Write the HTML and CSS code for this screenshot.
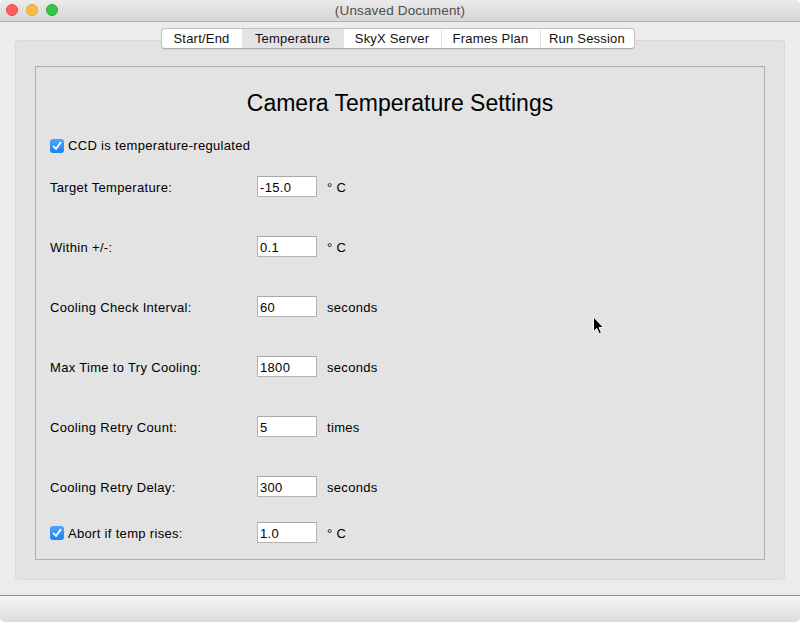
FILE: index.html
```html
<!DOCTYPE html>
<html>
<head>
<meta charset="utf-8">
<link rel="stylesheet" href="styles.css">
</head>
<body>
<div class="window">
  <div class="titlebar">
    <div class="lights">
      <span class="light red"></span>
      <span class="light yellow"></span>
      <span class="light green"></span>
    </div>
    <div class="title">(Unsaved Document)</div>
  </div>
  <div class="content">
    <div class="tabs">
      <div class="tab t1">Start/End</div>
      <div class="tab t2 selected">Temperature</div>
      <div class="tab t3">SkyX Server</div>
      <div class="tab t4">Frames Plan</div>
      <div class="tab t5">Run Session</div>
    </div>
    <div class="panel">
      <div class="box">
        <h1 class="heading">Camera Temperature Settings</h1>
        <div class="row check-row">
          <span class="checkbox"><svg viewBox="0 0 14 14" width="14" height="14"><path d="M3.6 7.4 L6 10 L10.6 3.6" fill="none" stroke="#fff" stroke-width="1.8" stroke-linecap="round" stroke-linejoin="round"/></svg></span>
          <span class="check-label">CCD is temperature-regulated</span>
        </div>
        <div class="row first">
          <span class="label">Target Temperature:</span>
          <span class="field">-15.0</span>
          <span class="unit">° C</span>
        </div>
        <div class="row">
          <span class="label">Within +/-:</span>
          <span class="field">0.1</span>
          <span class="unit">° C</span>
        </div>
        <div class="row">
          <span class="label">Cooling Check Interval:</span>
          <span class="field">60</span>
          <span class="unit">seconds</span>
        </div>
        <div class="row">
          <span class="label">Max Time to Try Cooling:</span>
          <span class="field">1800</span>
          <span class="unit">seconds</span>
        </div>
        <div class="row">
          <span class="label">Cooling Retry Count:</span>
          <span class="field">5</span>
          <span class="unit">times</span>
        </div>
        <div class="row">
          <span class="label">Cooling Retry Delay:</span>
          <span class="field">300</span>
          <span class="unit">seconds</span>
        </div>
        <div class="row last">
          <span class="label label-check">
            <span class="checkbox"><svg viewBox="0 0 14 14" width="14" height="14"><path d="M3.6 7.4 L6 10 L10.6 3.6" fill="none" stroke="#fff" stroke-width="1.8" stroke-linecap="round" stroke-linejoin="round"/></svg></span>
            <span class="check-label">Abort if temp rises:</span>
          </span>
          <span class="field">1.0</span>
          <span class="unit">° C</span>
        </div>
      </div>
    </div>
  </div>
  <div class="statusbar"></div>
  <svg class="cursor" viewBox="0 0 14 20" width="14" height="20"><path d="M1.5 1 L1.5 15.5 L4.8 12.4 L7.2 17.8 L9.4 16.8 L7.1 11.6 L11.6 11.6 Z" fill="#000" stroke="#fff" stroke-width="1" stroke-linejoin="round"/></svg>
</div>
</body>
</html>
```

FILE: styles.css
```css
* { box-sizing: border-box; }
html, body {
  margin: 0;
  padding: 0;
  background: #ffffff;
}
body {
  font-family: "Liberation Sans", Arial, sans-serif;
  font-size: 13px;
  color: #000;
}
.window {
  position: relative;
  width: 800px;
  height: 622px;
  border-radius: 5px;
  overflow: hidden;
  background: #ececec;
}
.titlebar {
  position: relative;
  height: 22px;
  background: linear-gradient(#ebebeb, #d6d6d6);
  border-bottom: 1px solid #b2b2b2;
  display: flex;
  align-items: center;
  justify-content: center;
}
.lights {
  position: absolute;
  left: 6px;
  top: 4px;
  display: flex;
  gap: 8px;
}
.light {
  width: 12px;
  height: 12px;
  border-radius: 50%;
  display: block;
}
.red { background: #fc605c; border: 1px solid #de4a45; }
.yellow { background: #fdbc40; border: 1px solid #dea236; }
.green { background: #34c84a; border: 1px solid #27aa35; }
.title {
  color: #4d4d4d;
  font-size: 13.5px;
  line-height: 21px;
  letter-spacing: 0.15px;
}
.content {
  height: 573px;
  padding: 6px 15px 15px 15px;
  display: flex;
  flex-direction: column;
}
.tabs {
  position: relative;
  z-index: 2;
  align-self: center;
  margin-right: 5px;
  height: 21px;
  display: flex;
  background: #fff;
  border: 1px solid #c3c3c3;
  border-bottom-color: #acacac;
  border-radius: 4px;
  overflow: hidden;
  box-shadow: 0 0.5px 1px rgba(0,0,0,0.08);
}
.tab {
  line-height: 19px;
  text-align: center;
  color: #111;
  font-size: 13px;
  letter-spacing: 0.2px;
}
.tab + .tab { border-left: 1px solid #e2e2e2; }
.t1 { width: 80px; }
.t2 { width: 101px; }
.t3 { width: 98px; }
.t4 { width: 99px; }
.t5 { width: 94px; }
.tab.selected { background: #e3e3e3; }
.panel {
  margin-top: -9px;
  height: 540px;
  background: #e3e3e3;
  border: 1px solid #d9d9d9;
  border-bottom-color: #dcdcdc;
  border-radius: 4px;
  padding: 25px 19px 19px 19px;
}
.box {
  height: 494px;
  border: 1px solid #aeaeae;
  padding: 23px 14px 0 14px;
  display: flex;
  flex-direction: column;
}
.heading {
  margin: 0;
  font-weight: normal;
  font-size: 23px;
  line-height: 26px;
  text-align: center;
  color: #000;
}
.row {
  height: 21px;
  display: flex;
  align-items: center;
  margin-top: 39px;
  letter-spacing: 0.32px;
}
.row.check-row { margin-top: 19px; }
.row.first { margin-top: 20px; }
.row.last { margin-top: 25px; }
.label {
  width: 207px;
  flex: none;
  display: flex;
  align-items: center;
  padding-top: 2px;
}
.label-check { padding-top: 0; }
.label-check .check-label { padding-top: 2px; }
.checkbox {
  width: 14px;
  height: 14px;
  border-radius: 3px;
  background: linear-gradient(#4ca3fd, #1a82fb);
  display: inline-flex;
  flex: none;
}
.checkbox svg { display: block; }
.check-label { margin-left: 4px; }
.field {
  width: 60px;
  height: 21px;
  background: #fff;
  border: 1px solid #b3b3b3;
  border-top-color: #a9a9a9;
  padding-left: 2px;
  padding-top: 1px;
  line-height: 19px;
  font-size: 13px;
  flex: none;
}
.unit { margin-left: 10px; padding-top: 2px; }
.statusbar {
  height: 27px;
  border-top: 1px solid #8f8f8f;
  background: linear-gradient(#f6f6f6, #dcdcdc);
}
.cursor {
  position: absolute;
  left: 592px;
  top: 316px;
}
```
